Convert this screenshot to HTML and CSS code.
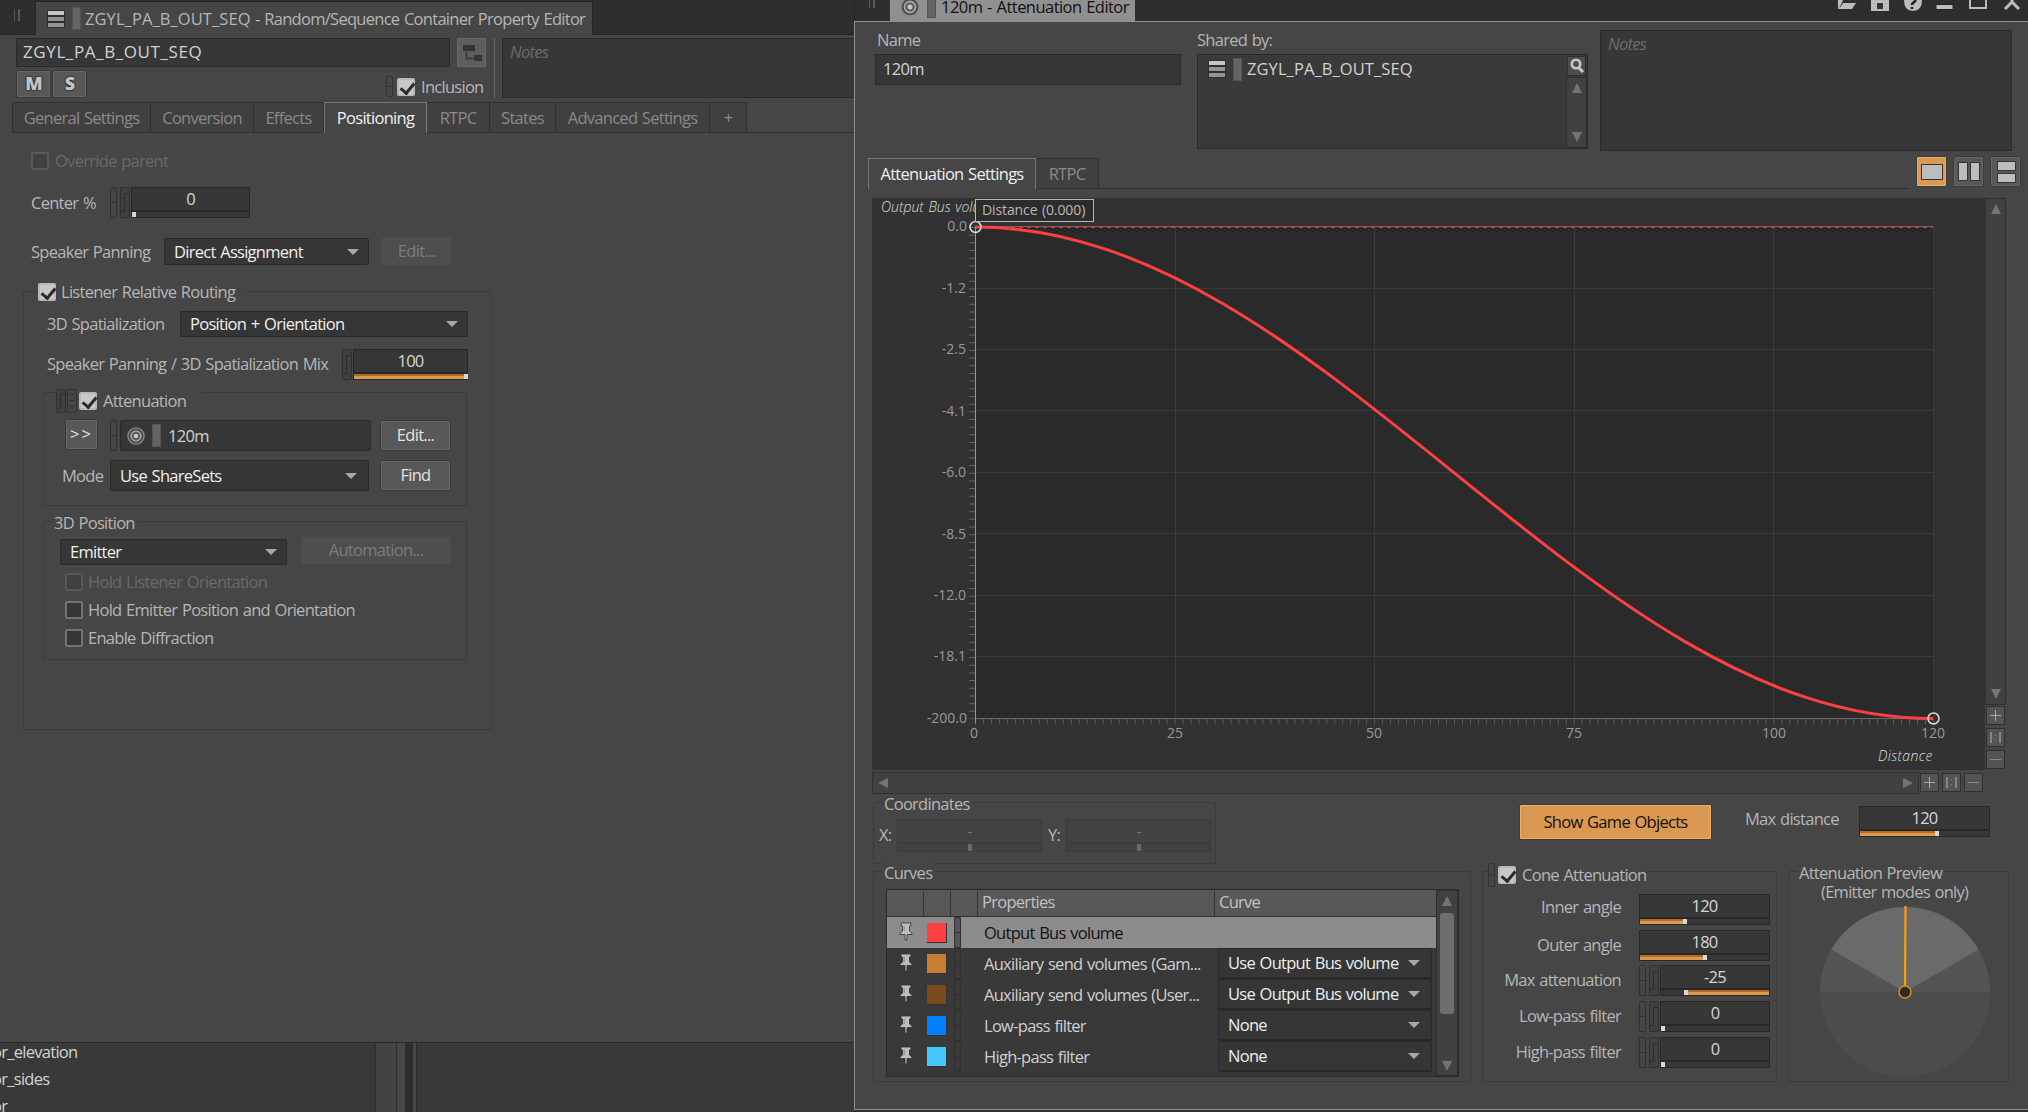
FILE: index.html
```html
<!DOCTYPE html>
<html lang="en">
  <head>
    <meta charset="UTF-8" />
    <meta name="viewport" content="width=device-width, initial-scale=1.0" />
    <title>Attenuation Editor</title>
    <link rel="stylesheet" href="styles.css">
  </head>
  <body>
    <!-- shared icons -->
    <svg class="defs" width="0" height="0">
      <symbol id="container" viewBox="0 0 20 20">
        <rect x="1" y="1" width="18" height="18" rx="1" fill="#2e2e2e" />
        <rect x="2" y="2" width="16" height="4" fill="#c6c6c6" />
        <rect x="2" y="8" width="16" height="4" fill="#959595" />
        <rect x="2" y="14" width="16" height="4" fill="#959595" />
      </symbol>
      <symbol id="target" viewBox="0 0 20 20">
        <circle cx="10" cy="10" r="9" fill="#484848" stroke="#8a8a8a" stroke-width="1.5" />
        <circle cx="10" cy="10" r="5.5" fill="#5a5a5a" stroke="#a5a5a5" stroke-width="1.8" />
        <circle cx="10" cy="10" r="2.5" fill="#c8c8c8" />
      </symbol>
      <symbol id="link" viewBox="0 0 7 31" preserveAspectRatio="none">
        <rect x=".5" y=".5" width="6" height="30" rx="1.5" fill="none" stroke="#303030" />
        <path d="M1 15.5h5" stroke="#303030" />
      </symbol>
      <symbol id="rtpc" viewBox="0 0 10 31" preserveAspectRatio="none">
        <rect x=".5" y=".5" width="9" height="30" rx="1.5" fill="#404040" stroke="#303030" />
        <path d="M1 24.5h3.5v-18h4.5" fill="none" stroke="#2c2c2c" />
      </symbol>
      <symbol id="states" viewBox="0 0 10 24">
        <rect x=".5" y=".5" width="9" height="23" rx="1.5" fill="none" stroke="#303030" />
        <path d="M3 5.5h4M3 11.5h4M3 17.5h4" stroke="#303030" />
      </symbol>
      <symbol id="pin" viewBox="0 0 18 20">
        <path d="M4 1h10v2.5l-1.5 .5v5l2.5 2v1.500h-5V18h-2v-5.500H3V11l2.500-2V4L4 3.500z" fill="#bdbdbd" stroke="#2f2f2f" stroke-width=".8" />
        <path d="M7.200 4v5" stroke="#858585" />
      </symbol>
    </svg>

    <div class="workspace">
      <section class="editor">
        <header class="titlebar">
          <i class="grip"></i>
          <div class="title-tab">
            <svg class="icon"><use href="#container" /></svg>
            <i class="color-bar"></i>
            <span><b class="caps">ZGYL_PA_B_OUT_SEQ</b> - Random/Sequence Container Property Editor</span>
          </div>
        </header>

        <div class="object-head">
          <div class="object-main">
            <div class="name-row">
              <div class="field name caps">ZGYL_PA_B_OUT_SEQ</div>
              <div class="hierarchy">
                <svg width="22" height="22">
                  <path d="M2 3h12v6H2zM13 13h8v6h-8z" fill="#333" />
                  <path d="M5.500 10v6.500h7" fill="none" stroke="#333" stroke-width="1.500" />
                </svg>
              </div>
            </div>
            <div class="ms-row">
              <button class="btn ms">M</button>
              <button class="btn ms">S</button>
              <div class="inclusion">
                <svg class="h21"><use href="#link" /></svg>
                <i class="check on"></i>Inclusion
              </div>
            </div>
          </div>
          <div class="field notes">Notes</div>
        </div>

        <nav class="tabs">
          <span style="width: 139px">General Settings</span>
          <span style="width: 103px">Conversion</span>
          <span style="width: 70px">Effects</span>
          <span class="active" style="width: 103px">Positioning</span>
          <span style="width: 63px">RTPC</span>
          <span style="width: 66px">States</span>
          <span style="width: 154px">Advanced Settings</span>
          <span style="width: 37px">+</span>
        </nav>

        <div class="positioning">
          <div class="row override off"><i class="check off"></i>Override parent</div>
          <div class="row center">
            <label>Center %</label>
            <svg class="h7"><use href="#link" /></svg>
            <svg class="h10"><use href="#rtpc" /></svg>
            <div class="slider"><span>0</span><div class="track"><i class="knob"></i></div></div>
          </div>
          <div class="row panning">
            <label>Speaker Panning</label>
            <div class="select">Direct Assignment</div>
            <button class="btn off">Edit...</button>
          </div>

          <div class="group routing">
            <div class="legend"><i class="check on"></i>Listener Relative Routing</div>
            <div class="row spat">
              <label>3D Spatialization</label>
              <div class="select">Position + Orientation</div>
            </div>
            <div class="row mix">
              <label>Speaker Panning / 3D Spatialization Mix</label>
              <svg class="h10"><use href="#rtpc" /></svg>
              <div class="slider"><span>100</span><div class="track"><i class="fill" style="width: 97%"></i><i class="knob"></i></div></div>
            </div>

            <div class="group attenuation">
              <div class="legend">
                <svg class="h10 short"><use href="#rtpc" /></svg>
                <svg class="h10 short"><use href="#states" /></svg>
                <i class="check on"></i>Attenuation
              </div>
              <div class="row share">
                <button class="btn more">&gt;&gt;</button>
                <svg class="h7"><use href="#link" /></svg>
                <div class="field">
                  <svg class="icon"><use href="#target" /></svg>
                  <i class="color-bar"></i>120m
                </div>
                <button class="btn">Edit...</button>
              </div>
              <div class="row mode">
                <label>Mode</label>
                <div class="select">Use ShareSets</div>
                <button class="btn">Find</button>
              </div>
            </div>

            <div class="group position">
              <div class="legend">3D Position</div>
              <div class="row emitter">
                <div class="select">Emitter</div>
                <button class="btn off">Automation...</button>
              </div>
              <div class="row opt off"><i class="check off"></i>Hold Listener Orientation</div>
              <div class="row opt"><i class="check"></i>Hold Emitter Position and Orientation</div>
              <div class="row opt"><i class="check"></i>Enable Diffraction</div>
            </div>
          </div>
        </div>

        <footer class="lower">
          <div class="objects">
            <p>or_elevation</p>
            <p>or_sides</p>
            <p>or</p>
          </div>
          <i class="lower-scroll"></i>
          <i class="lower-edge"></i>
          <i class="lower-split"></i>
          <i class="lower-gap"></i>
        </footer>
      </section>

      <section class="window">
        <header class="window-bar">
          <i class="grip"></i>
          <div class="window-tab">
            <svg class="icon"><use href="#target" /></svg>
            <i class="color-bar"></i>
            <span>120m - Attenuation Editor</span>
          </div>
          <svg class="window-icons" width="190" height="21" fill="#bdbdbd">
            <path d="M1 9V0h5L2 9z M6 3h13l-4 6H2z" />
            <path d="M34 0h18v11H34z" /><path d="M40 3h6v6h-6z" fill="#333" />
            <path d="M67 0h18q0 11-9 11T67 0z" /><path d="M79 0l-4 4v1M75 7v2" stroke="#222" stroke-width="2.500" fill="none" />
            <path d="M99 4.500h17v5H99z" stroke="#222" />
            <path d="M133-4v12h16V-4" fill="none" stroke="#bdbdbd" stroke-width="2" />
            <path d="M168 9l7-7 7 7M175 2v-3" fill="none" stroke="#bdbdbd" stroke-width="3" />
          </svg>
        </header>

        <div class="window-body">
          <div class="info">
            <div class="info-name">
              <p>Name</p>
              <div class="field">120m</div>
            </div>
            <div class="info-shared">
              <p>Shared by:</p>
              <div class="field">
                <div class="shared-item">
                  <svg class="icon"><use href="#container" /></svg>
                  <i class="color-bar"></i>
                  <span class="caps">ZGYL_PA_B_OUT_SEQ</span>
                </div>
                <div class="shared-side">
                  <div class="search">
                    <svg width="17" height="17"><circle cx="8" cy="7" r="4.200" fill="none" stroke="#c8c8c8" stroke-width="2.600" /><path d="M11 11l4 4" stroke="#c8c8c8" stroke-width="3" /></svg>
                  </div>
                  <div class="scroll"><i class="up"></i><i class="down"></i></div>
                </div>
              </div>
            </div>
            <div class="field notes">Notes</div>
          </div>

          <div class="tab-row">
            <nav class="tabs">
              <span class="active" style="width: 168px">Attenuation Settings</span>
              <span style="width: 63px">RTPC</span>
            </nav>
            <div class="views">
              <button class="btn view active"><svg width="24" height="22"><path d="M1.500 3.500h21v15h-21z" fill="#bdbdbd" stroke="#333" /></svg></button>
              <button class="btn view"><svg width="24" height="22"><path d="M1.500 1.500h9v18h-9zM13.500 1.500h9v18h-9z" fill="#bdbdbd" stroke="#333" /></svg></button>
              <button class="btn view"><svg width="24" height="24"><path d="M3.500 1.500h18v9h-18zM3.500 13.500h18v9h-18z" fill="#bdbdbd" stroke="#333" /></svg></button>
            </div>
          </div>

          <div class="graph">
            <svg class="chart" width="1113" height="572">
              <text class="axis-name" x="9" y="14" textLength="118">Output Bus volume</text>
              <rect x="103" y="29" width="958" height="491" fill="#2a2a2a" />
              <path class="grid" d="M103 90.500h958M103 151.500h958M103 212.500h958M103 274.500h958M103 335.500h958M103 397.500h958M103 458.500h958M303.500 29v491M502.500 29v491M702.500 29v491M901.500 29v491M1061.500 29v491" />
              <path d="M103 28.500h958M103 520.500h958" stroke="#6a6a6a" />
              <path d="M115 29h946" stroke="#b84444" stroke-width="2" stroke-dasharray="4 4" />
              <path d="M100 29v492" stroke="#666" stroke-width="6" stroke-dasharray="1 6.680" />
              <path d="M103 523.500h959" stroke="#5c5c5c" stroke-width="6" stroke-dasharray="1 6.983" />
              <path d="M103.500 29v496" stroke="#989898" />
              <path d="M103.500 29C452 29 712 520.500 1061 520.500" fill="none" stroke="#ff4040" stroke-width="3" />
              <circle class="point" cx="103.500" cy="29" r="5.500" />
              <circle class="point" cx="1061.500" cy="520.500" r="5.500" />
              <g class="ticks end">
                <text x="95" y="33">0.0</text><text x="94" y="95">-1.2</text><text x="94" y="156">-2.5</text>
                <text x="94" y="218">-4.1</text><text x="94" y="279">-6.0</text><text x="94" y="341">-8.5</text>
                <text x="94" y="402">-12.0</text><text x="94" y="463">-18.1</text><text x="95" y="525">-200.0</text>
              </g>
              <g class="ticks">
                <text x="102" y="540">0</text><text x="303" y="540">25</text><text x="502" y="540">50</text>
                <text x="702" y="540">75</text><text x="902" y="540">100</text><text x="1061" y="540">120</text>
              </g>
              <text class="axis-name" x="1006" y="563" textLength="54">Distance</text>
              <rect x="103.500" y="1.500" width="118" height="22" fill="#2c2c2c" stroke="#b8b8b8" />
              <text class="tip" x="110" y="17" textLength="103">Distance (0.000)</text>
            </svg>
            <div class="graph-side">
              <div class="scroll"><i class="up"></i><i class="down"></i></div>
              <button class="zoom plus"></button>
              <button class="zoom one"></button>
              <button class="zoom minus"></button>
            </div>
          </div>
          <div class="graph-foot">
            <div class="scroll wide"><i class="left"></i><i class="right"></i></div>
            <button class="zoom plus"></button>
            <button class="zoom one"></button>
            <button class="zoom minus"></button>
          </div>

          <div class="settings">
            <div class="settings-left">
              <div class="group coords">
                <div class="legend">Coordinates</div>
                <div class="row">
                  <label>X:</label>
                  <div class="slider off"><span>-</span><div class="track"><i class="knob"></i></div></div>
                  <label>Y:</label>
                  <div class="slider off"><span>-</span><div class="track"><i class="knob"></i></div></div>
                </div>
              </div>
              <div class="group curves">
                <div class="legend">Curves</div>
                <div class="curve-box">
                  <div class="curve-table">
                    <div class="curve-head"><span></span><span></span><span></span><span>Properties</span><span>Curve</span></div>
                    <div class="curve selected">
                      <svg class="pin"><use href="#pin" /></svg><i class="swatch red"></i><svg class="curve-link"><use href="#link" /></svg>
                      <span>Output Bus volume</span>
                    </div>
                    <div class="curve">
                      <svg class="pin"><use href="#pin" /></svg><i class="swatch orange"></i><svg class="curve-link"><use href="#link" /></svg>
                      <span>Auxiliary send volumes (Gam...</span>
                      <div class="select">Use Output Bus volume</div>
                    </div>
                    <div class="curve">
                      <svg class="pin"><use href="#pin" /></svg><i class="swatch brown"></i><svg class="curve-link"><use href="#link" /></svg>
                      <span>Auxiliary send volumes (User...</span>
                      <div class="select">Use Output Bus volume</div>
                    </div>
                    <div class="curve">
                      <svg class="pin"><use href="#pin" /></svg><i class="swatch blue"></i><svg class="curve-link"><use href="#link" /></svg>
                      <span>Low-pass filter</span>
                      <div class="select">None</div>
                    </div>
                    <div class="curve">
                      <svg class="pin"><use href="#pin" /></svg><i class="swatch sky"></i><svg class="curve-link"><use href="#link" /></svg>
                      <span>High-pass filter</span>
                      <div class="select">None</div>
                    </div>
                  </div>
                  <div class="scroll"><i class="up"></i><i class="thumb"></i><i class="down"></i></div>
                </div>
              </div>
            </div>

            <div class="settings-right">
              <div class="distance">
                <button class="btn show">Show Game Objects</button>
                <label>Max distance</label>
                <div class="slider"><span>120</span><div class="track"><i class="fill" style="width: 58%"></i><i class="knob"></i></div></div>
              </div>
              <div class="cones">
                <div class="group cone">
                  <div class="legend">
                    <svg class="h7 short"><use href="#link" /></svg>
                    <i class="check on"></i>Cone Attenuation
                  </div>
                  <div class="row inner">
                    <label>Inner angle</label>
                    <div class="slider"><span>120</span><div class="track"><i class="fill" style="width: 33%"></i><i class="knob"></i></div></div>
                  </div>
                  <div class="row">
                    <label>Outer angle</label>
                    <div class="slider"><span>180</span><div class="track"><i class="fill" style="width: 49%"></i><i class="knob"></i></div></div>
                  </div>
                  <div class="row">
                    <label>Max attenuation</label>
                    <svg class="h7"><use href="#link" /></svg><svg class="h10"><use href="#rtpc" /></svg>
                    <div class="slider"><span>-25</span><div class="track from-right"><i class="fill" style="width: 75%"></i><i class="knob"></i></div></div>
                  </div>
                  <div class="row">
                    <label>Low-pass filter</label>
                    <svg class="h7"><use href="#link" /></svg><svg class="h10"><use href="#rtpc" /></svg>
                    <div class="slider"><span>0</span><div class="track"><i class="knob"></i></div></div>
                  </div>
                  <div class="row">
                    <label>High-pass filter</label>
                    <svg class="h7"><use href="#link" /></svg><svg class="h10"><use href="#rtpc" /></svg>
                    <div class="slider"><span>0</span><div class="track"><i class="knob"></i></div></div>
                  </div>
                </div>
                <div class="group preview">
                  <div class="legend">Attenuation Preview</div>
                  <p>(Emitter modes only)</p>
                  <svg width="172" height="174">
                    <circle cx="86" cy="88" r="85" fill="#4c4c4c" />
                    <path d="M1 88a85 85 0 0 1 170 0z" fill="#545454" />
                    <path d="M86 88L12.400 45.500a85 85 0 0 1 147.200 0z" fill="#6a6a6a" />
                    <path d="M86.500 2L86 82" stroke="#ff9c05" stroke-width="2.200" />
                    <circle cx="86" cy="88" r="6" fill="#2b2b2b" stroke="#e08c10" stroke-width="1.500" />
                  </svg>
                </div>
              </div>
            </div>
          </div>
        </div>
      </section>
    </div>
  </body>
</html>
```
FILE: styles.css
```css
* {
  box-sizing: border-box;
}

body {
  margin: 0;
  overflow: hidden;
  background: #2e2e2e;
  color: #b6b6b6;
  font: 16.5px/20px "Open Sans", "Noto Sans", sans-serif;
  letter-spacing: -0.72px;
  word-spacing: 1px;
  white-space: nowrap;
}

p {
  margin: 0;
}

i {
  display: block;
  flex: none;
}

svg {
  display: block;
  flex: none;
}

label {
  flex: none;
}

.defs {
  position: absolute;
}

.caps {
  font-weight: 400;
  letter-spacing: 0.08px;
}

.icon {
  width: 20px;
  height: 20px;
}

.workspace {
  display: flex;
  width: 2028px;
  height: 1112px;
}

/* Common controls */
.row {
  display: flex;
  align-items: center;
}

.field {
  background: #373737;
  border: 1px solid #2a2a2a;
  color: #d2d2d2;
}

.notes {
  color: #6c6c6c;
  font-style: italic;
  padding: 3px 7px;
}

.color-bar {
  width: 9px;
  height: 23px;
  background: #646464;
  border: 1px solid #555;
}

.grip {
  width: 6px;
  height: 12px;
  border: solid #5a5a5a;
  border-width: 0 2px 0 1px;
}

.btn {
  flex: none;
  padding: 0 0 2px;
  background: #585858;
  border: 1px solid #3a3a3a;
  border-radius: 2px;
  box-shadow: inset 0 0 0 1px #666;
  color: #e4e4e4;
  font: inherit;
  letter-spacing: inherit;
  word-spacing: inherit;

  &.off {
    background: #4e4e4e;
    border-color: #484848;
    box-shadow: none;
    color: #7c7c7c;
  }
}

.select {
  display: flex;
  align-items: center;
  justify-content: space-between;
  padding: 0 9px;
  background: #363636;
  border: 1px solid #292929;
  border-radius: 2px;
  color: #efefef;

  &::after {
    content: "";
    border: 6px solid transparent;
    border-top-color: #a8a8a8;
    border-bottom: 0;
  }
}

.check {
  width: 18px;
  height: 18px;
  background: #363636;
  border: 2px solid #747474;
  border-radius: 2px;

  &.off {
    background: #404040;
    border-color: #585858;
  }

  &.on {
    background: #c8c8c8;
    border-color: #b8b8b8;
  }

  &.on::after {
    content: "";
    display: block;
    width: 6px;
    height: 11px;
    margin: 0 0 0 4px;
    border: solid #2b2b2b;
    border-width: 0 3px 3px 0;
    transform: rotate(40deg);
  }
}

.row.off {
  color: #6a6a6a;
}

.h7 {
  width: 7px;
  height: 31px;
}

.h10 {
  width: 10px;
  height: 31px;
}

.h21 {
  width: 7px;
  height: 21px;
}

.short {
  height: 24px;
}

.slider {
  display: flex;
  flex-direction: column;
  flex: none;
  height: 31px;
  background: #373737;
  border: 1px solid #282828;
  color: #d6d6d6;
  text-align: center;

  span {
    height: 24px;
    line-height: 22px;
    border-bottom: 2px solid #282828;
  }

  &.off {
    background: #424242;
    border-color: #3b3b3b;
    color: #777;
  }

  &.off span {
    border-color: #3d3d3d;
  }

  &.off .track {
    justify-content: center;
  }

  &.off .knob {
    background: #6a6a6a;
  }
}

.track {
  display: flex;
  flex: 1;

  &.from-right {
    flex-direction: row-reverse;
  }
}

.fill {
  background: linear-gradient(#b06c24 2px, #db9850 2px);
}

.knob {
  width: 4px;
  background: #d8d8d8;
}

.group {
  border: 1px solid #3b3b3b;
  border-radius: 2px;
}

.legend {
  display: flex;
  align-items: center;
  width: max-content;
  background: #464646;
}

.tabs {
  display: flex;
  align-items: flex-end;
  border-bottom: 1px solid #303030;

  span {
    flex: none;
    height: 30px;
    padding-top: 5px;
    background: #404040;
    border: 1px solid #303030;
    border-width: 1px 1px 0 0;
    color: #8a8a8a;
    text-align: center;
  }

  .active {
    height: 31px;
    margin-bottom: -1px;
    background: #464646;
    border-color: #777;
    border-left-width: 1px;
    color: #f0f0f0;
  }
}

.scroll {
  display: flex;
  flex-direction: column;
  align-items: center;
  justify-content: space-between;
  width: 21px;
  padding: 5px 0;
  background: #414141;
  border: 1px solid #303030;

  .up,
  .down {
    border: 5.500px solid transparent;
  }

  .up {
    border-top: 0;
    border-bottom: 10px solid #747474;
  }

  .down {
    border-bottom: 0;
    border-top: 10px solid #747474;
  }

  &.wide {
    flex-direction: row;
    width: 1047px;
    height: 22px;
    padding: 0 5px;
  }

  .left,
  .right {
    border: 5.500px solid transparent;
  }

  .left {
    border-left: 0;
    border-right: 10px solid #747474;
  }

  .right {
    border-right: 0;
    border-left: 10px solid #747474;
  }
}

.zoom {
  flex: none;
  width: 19px;
  height: 19px;
  padding: 0;
  border: 1px solid #2f2f2f;
  background-color: #545454;
  background-position: center;
  background-repeat: no-repeat;

  &.plus {
    background-image: linear-gradient(#a8a8a8, #a8a8a8), linear-gradient(#a8a8a8, #a8a8a8);
    background-size: 11px 1px, 1px 11px;
  }

  &.minus {
    background-image: linear-gradient(#888, #888);
    background-size: 11px 1px;
  }

  &.one {
    background-image: linear-gradient(#858585, #858585), linear-gradient(#858585, #858585),
      linear-gradient(#777 2px, transparent 2px 5px, #777 5px);
    background-size: 2px 11px, 2px 11px, 1px 7px;
    background-position: 3px 3px, 12px 3px, center;
  }
}

/* Property editor */
.editor {
  display: flex;
  flex-direction: column;
  flex: none;
  width: 854px;
  background: #464646;
  overflow: hidden;
}

.titlebar {
  display: flex;
  height: 35px;
  background: #2e2e2e;
  border-bottom: 1px solid #252525;

  .grip {
    margin: 9px 15px 0 14px;
  }
}

.title-tab {
  display: flex;
  align-items: center;
  width: 558px;
  height: 34px;
  margin-top: 1px;
  padding-left: 10px;
  background: #464646;
  border: 1px solid #252525;
  border-bottom: 0;

  .color-bar {
    margin: 0 4px 0 6px;
  }
}

.object-head {
  display: flex;
  margin-top: 3px;
  padding-left: 16px;
}

.object-main {
  flex: none;
  width: 479px;
  border-right: 1px solid #6a6a6a;
}

.object-head .notes {
  width: 360px;
  height: 60px;
  margin-left: 7px;
  flex: none;
}

.name-row {
  display: flex;
  gap: 7px;
}

.field.name {
  width: 434px;
  height: 29px;
  padding: 3px 6px;
  font-size: 17px;
  letter-spacing: 0.6px;
}

.hierarchy {
  display: flex;
  align-items: center;
  justify-content: center;
  width: 29px;
  height: 29px;
  background: #5e5e5e;
  border: 1px solid #686868;
}

.ms-row {
  display: flex;
  margin-top: 3px;
}

.ms {
  width: 35px;
  height: 28px;
  margin: 0 1px 0 0;
  color: #c4c4c4;
  font-size: 18px;
  font-weight: 800;
  text-shadow: 0 0 2px #222, 0 0 2px #222;
}

.inclusion {
  display: flex;
  align-items: center;
  margin: 6px 0 0 298px;
  height: 21px;

  .check {
    margin: 0 6px 0 4px;
  }
}

.editor > .tabs {
  height: 31px;
  margin: 4px 0 0 12px;

  span:first-child {
    border-left-width: 1px;
  }
}

.positioning {
  height: 910px;
}

.override {
  height: 18px;
  margin: 19px 0 0 31px;

  .check {
    margin-right: 6px;
  }
}

.center {
  margin: 17px 0 0 31px;
  gap: 3px;

  label {
    width: 76px;
  }

  .slider {
    width: 119px;
    margin-left: -2px;
  }
}

.panning {
  height: 29px;
  margin: 19px 0 0 31px;

  label {
    width: 133px;
  }

  .select {
    width: 205px;
    height: 27px;
  }

  .btn {
    width: 71px;
    height: 29px;
    margin-left: 12px;
  }
}

.routing {
  width: 469px;
  height: 439px;
  margin: 25px 0 0 23px;

  > .legend {
    height: 18px;
    margin: -9px 0 0 14px;
    padding-right: 10px;
  }

  > .legend .check {
    margin-right: 5px;
  }
}

.spat {
  height: 26px;
  margin: 10px 0 0 23px;

  label {
    width: 133px;
  }

  .select {
    width: 288px;
    height: 26px;
  }
}

.mix {
  margin: 12px 0 0 23px;

  label {
    width: 295px;
    margin-top: -2px;
  }

  .slider {
    width: 115px;
    margin-left: 1px;
  }
}

.attenuation {
  width: 424px;
  height: 114px;
  margin: 12px 0 0 19px;

  .legend {
    height: 24px;
    margin: -4px 0 0 12px;
    padding-right: 16px;
    gap: 1px;
  }

  .check {
    margin: 0 5px 0 1px;
  }
}

.share {
  height: 33px;
  margin: 6px 0 0 21px;

  .more {
    width: 33px;
    height: 31px;
    margin: 0 12px 2px 0;
    letter-spacing: 2px;
  }

  .h7 {
    margin-right: 3px;
  }

  .field {
    display: flex;
    align-items: center;
    width: 251px;
    height: 31px;
    padding-left: 6px;
    border-radius: 2px;
  }

  .icon {
    width: 18px;
    height: 18px;
  }

  .color-bar {
    margin: 0 7px;
  }

  .btn:last-child {
    width: 71px;
    height: 31px;
    margin-left: 9px;
  }
}

.mode {
  height: 31px;
  margin: 8px 0 0 18px;

  label {
    width: 48px;
  }

  .select {
    width: 259px;
    height: 31px;
    padding-right: 11px;
  }

  .btn {
    width: 71px;
    height: 31px;
    margin-left: 11px;
  }
}

.position {
  width: 424px;
  height: 139px;
  margin: 15px 0 0 19px;

  .legend {
    height: 20px;
    margin: -9px 0 0 8px;
    padding: 0 2px;
  }
}

.emitter {
  height: 29px;
  margin: 3px 0 0 16px;

  .select {
    width: 227px;
    height: 26px;
    margin-top: 3px;
  }

  .btn {
    width: 150px;
    height: 29px;
    margin-left: 14px;
  }
}

.opt {
  height: 18px;
  margin: 10px 0 0 21px;

  .check {
    margin-right: 5px;
  }
}

.emitter + .opt {
  margin-top: 8px;
}

.lower {
  display: flex;
  height: 70px;
  border-top: 1px solid #292929;
  background: #393939;

  .lower-scroll {
    width: 22px;
    background: #434343;
    border: solid #2e2e2e;
    border-width: 0 1px;
  }

  .lower-edge {
    width: 8px;
    background: #464646;
  }

  .lower-split {
    width: 8px;
    background: #2c2c2c;
  }

  .lower-gap {
    width: 4px;
    background: #464646;
    border-right: 1px solid #2c2c2c;
  }
}

.objects {
  width: 375px;
  height: 69px;
  overflow: hidden;
  color: #d2d2d2;

  p {
    height: 27px;
    margin-left: -8px;
    line-height: 18px;
  }
}

/* Attenuation window */
.window {
  flex: none;
  width: 1174px;
}

.window-bar {
  display: flex;
  height: 21px;
  overflow: hidden;
  background: #2e2e2e;
  border-left: 1px solid #252525;

  .grip {
    margin: -4px 15px 0 14px;
  }
}

.window-tab {
  display: flex;
  align-items: center;
  flex: none;
  width: 245px;
  height: 30px;
  margin-top: -9px;
  padding-left: 10px;
  background: #909090;
  color: #111;
  letter-spacing: -0.55px;

  .color-bar {
    margin: 0 5px 0 7px;
  }
}

.window-bar .window-tab {
  height: 31px;
}

.window-icons {
  margin-left: 702px;
}

.window-body {
  height: 1089px;
  background: #464646;
  border: 1px solid #909090;
  border-right: 0;
}

.info {
  display: flex;
  height: 134px;
  padding: 8px 0 0 20px;

  .notes {
    width: 412px;
    height: 121px;
    margin-left: 12px;
  }
}

.info-name {
  width: 306px;

  p {
    padding-left: 2px;
  }

  .field {
    height: 31px;
    margin-top: 4px;
    padding: 4px 7px;
  }
}

.info-shared {
  width: 391px;
  margin-left: 16px;

  .field {
    display: flex;
    justify-content: space-between;
    height: 95px;
    margin-top: 4px;
    background: #3a3a3a;
  }
}

.shared-item {
  display: flex;
  align-items: center;
  height: 26px;
  margin: 1px 0 0 9px;

  .color-bar {
    margin: 0 5px 0 6px;
  }
}

.shared-side {
  .search {
    width: 19px;
    height: 20px;
    margin: 1px;
    background: #4c4c4c;
    border: 1px solid #2e2e2e;
  }

  .scroll {
    height: 71px;
  }
}

.tab-row {
  display: flex;
  height: 33px;
  padding-left: 11px;

  .tabs {
    width: 1044px;
    padding-left: 2px;
  }
}

.views {
  display: flex;
  gap: 6px;
  margin-left: 6px;
}

.view {
  display: flex;
  align-items: center;
  justify-content: center;
  width: 31px;
  height: 31px;
  padding: 0;

  &.active {
    background: #db9850;
    box-shadow: inset 0 0 0 1px #eeb06a;
  }
}

.graph {
  display: flex;
  margin: 9px 0 0 17px;
}

.chart {
  background: #323232;
  font-size: 14px;
  letter-spacing: -0.300px;

  .grid {
    fill: none;
    stroke: #3a3a3a;
  }

  .point {
    fill: none;
    stroke: #dcdcdc;
    stroke-width: 1.500;
  }

  .ticks {
    fill: #999;
    text-anchor: middle;
    letter-spacing: 0;
  }

  .end {
    text-anchor: end;
  }

  .axis-name {
    fill: #ddd;
    font-style: italic;
    font-weight: 300;
  }

  .tip {
    fill: #b8b8b8;
  }
}

.graph-side {
  width: 21px;

  .scroll {
    height: 507px;
    margin-bottom: 1px;
  }

  .zoom {
    display: block;
    margin: 0 0 3px 1px;
  }
}

.graph-foot {
  display: flex;
  gap: 3px;
  height: 22px;
  padding-left: 17px;

  .zoom {
    margin-top: 1px;
  }

  .scroll {
    margin-right: -2px;
  }
}

.settings {
  display: flex;
  padding-left: 18px;
}

.settings-left {
  width: 598px;
}

.coords {
  width: 343px;
  height: 62px;
  margin-top: 8px;

  .legend {
    height: 20px;
    margin: -9px 0 0 8px;
    padding: 0 2px;
  }

  .row {
    height: 34px;
    margin: 4px 0 0 5px;
  }

  label {
    width: 18px;
  }

  .slider {
    width: 145px;
    height: 33px;
    margin-right: 6px;
  }
}

.curves {
  height: 211px;
  margin-top: 7px;

  .legend {
    height: 20px;
    margin: -9px 0 0 8px;
    padding: 0 2px;
  }
}

.curve-box {
  display: flex;
  width: 573px;
  height: 188px;
  margin: 6px 0 0 12px;
  overflow: hidden;
  background: #393939;
  border: 1px solid #2a2a2a;

  .scroll {
    justify-content: flex-start;
    width: 22px;
    padding-bottom: 4px;
  }

  .thumb {
    width: 14px;
    height: 101px;
    margin: 7px 0 auto;
    background: #6e6e6e;
    border-radius: 3px;
  }
}

.curve-table {
  width: 549px;
  flex: none;
}

.curve-head {
  display: grid;
  grid-template-columns: 37px 27px 27px 237px 1fr;
  height: 27px;
  background: #585858;
  border-bottom: 1px solid #303030;

  span {
    padding: 1px 0 0 4px;
    border-right: 1px solid #363636;
    margin-top: 1px;
    height: 25px;
    color: #c2c2c2;
  }

  span:last-child {
    border: 0;
  }
}

.curve {
  display: flex;
  height: 31px;
  color: #d0d0d0;

  > span {
    flex: none;
    width: 257px;
    padding: 6px 0 0 23px;
  }

  .select {
    flex: none;
    width: 214px;
    height: 31px;
    padding: 0 11px 0 9px;
    border-bottom-width: 2px;
  }
}

.curve.selected {
  background: #8c8c8c;
  color: #111;

  .curve-link {
    background: #555;
  }
}

.pin {
  width: 18px;
  height: 20px;
  margin: 5px 12px 0 10px;
}

.swatch {
  width: 20px;
  height: 20px;
  margin-top: 6px;
  border: solid #333;
  border-width: 0 1px 1px 0;
}

.curve-link {
  width: 7px;
  height: 31px;
  margin: 0 0 0 7px;
}

.red { background: #ff4040; }
.orange { background: #c87d32; }
.brown { background: #7b4b1c; }
.blue { background: #0080ff; }
.sky { background: #45c8ff; }

.settings-right {
  width: 527px;
  margin-left: 11px;
}

.distance {
  display: flex;
  height: 35px;
  margin: 10px 0 0 37px;

  .show {
    width: 193px;
    height: 36px;
    padding: 0;
    background: #db9850;
    box-shadow: inset 0 0 0 1px #eeb06a;
    color: #111;
  }

  label {
    width: 114px;
    margin: 5px 0 0 33px;
  }

  .slider {
    width: 131px;
    margin-top: 2px;
  }
}

.cones {
  display: flex;
  gap: 11px;
  margin-top: 32px;
}

.cone {
  width: 295px;
  height: 211px;

  .legend {
    height: 24px;
    margin: -9px 0 7px 5px;
  }

  .check {
    margin: 0 6px 0 3px;
  }

  .row {
    height: 31px;
    margin-bottom: 4.700px;
  }

  label {
    width: 138px;
    margin: -1px 18px 0 0;
    text-align: right;
  }

  .inner label {
    margin-top: -6px;
  }

  .row .h7 {
    margin-right: 3px;
  }

  .slider {
    width: 131px;
  }

  .h10 + .slider {
    width: 110px;
    margin-left: 1px;
  }
}

.preview {
  width: 221px;
  height: 211px;

  .legend {
    height: 20px;
    margin: -9px 0 0 8px;
    padding: 0 2px;
  }

  p {
    padding-left: 32px;
    margin-top: -1px;
  }

  svg {
    margin: 2px 0 0 30px;
  }
}
```
